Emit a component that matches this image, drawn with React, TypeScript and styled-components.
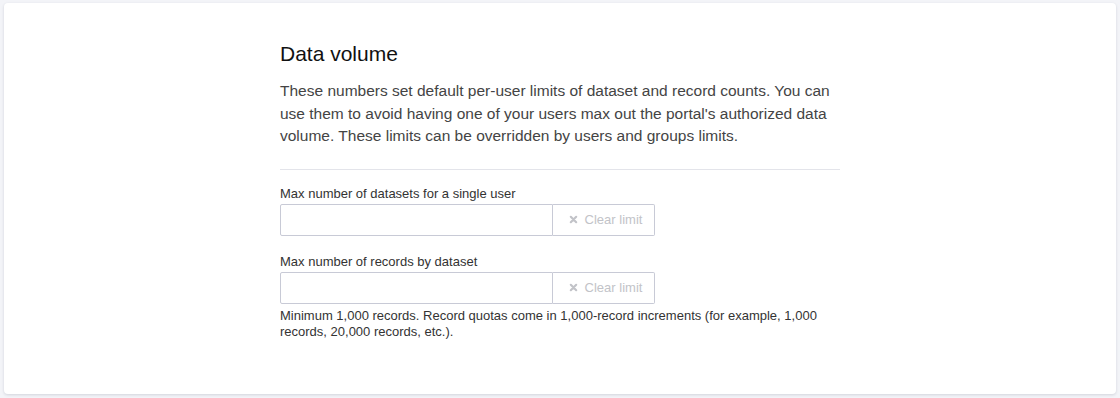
import React from "react";
import styled, { createGlobalStyle } from "styled-components";

const Global = createGlobalStyle`
  html, body {
    margin: 0;
    padding: 0;
    background: #f3f4f8;
    font-family: "Liberation Sans", Arial, sans-serif;
  }
  * { box-sizing: border-box; }
`;

const Page = styled.div`
  padding: 3px 4px 4px 4px;
`;

const Card = styled.div`
  background: #fff;
  border-radius: 4px;
  box-shadow: 0 1px 3px rgba(20, 30, 60, 0.15);
  height: 391px;
  padding: 39px 0 0 0;
`;

const Column = styled.div`
  width: 560px;
  margin: 0 auto;
`;

const Title = styled.h2`
  margin: 0;
  font-size: 21px;
  font-weight: 400;
  line-height: 24px;
  color: #111;
`;

const Intro = styled.p`
  margin: 14px 0 0 0;
  font-size: 15.5px;
  line-height: 22.5px;
  color: #444;
`;

const Divider = styled.hr`
  border: 0;
  border-top: 1px solid #e3e4ea;
  margin: 21px 0 16px 0;
`;

const Field = styled.div`
  margin-bottom: 18px;
`;

const Label = styled.label`
  display: block;
  font-size: 13px;
  line-height: 16px;
  color: #333;
  margin-bottom: 2px;
`;

const Group = styled.div`
  display: flex;
  height: 32px;
`;

const Input = styled.input`
  width: 273px;
  height: 32px;
  border: 1px solid #c8cad6;
  border-radius: 2px 0 0 2px;
  padding: 0 8px;
  font-size: 13px;
  outline: none;
`;

const ClearButton = styled.button`
  width: 102px;
  height: 32px;
  border: 1px solid #c8cad6;
  border-left: 0;
  border-radius: 0 2px 2px 0;
  background: #fff;
  color: #c2c3c8;
  font-family: inherit;
  font-size: 13px;
  display: flex;
  align-items: center;
  justify-content: center;
  gap: 7px;
  padding: 0 0 0 4px;
`;

const Help = styled.div`
  margin-top: 4px;
  font-size: 13px;
  line-height: 16px;
  color: #333;
`;

const XIcon = () => (
  <svg width="9" height="9" viewBox="0 0 10 10">
    <path d="M2 2 L8 8 M8 2 L2 8" stroke="#c2c3c8" strokeWidth="2.4" strokeLinecap="round" />
  </svg>
);

export default function App() {
  return (
    <>
      <Global />
      <Page>
        <Card>
          <Column>
            <Title>Data volume</Title>
            <Intro>
              These numbers set default per-user limits of dataset and record counts. You can
              use them to avoid having one of your users max out the portal's authorized data
              volume. These limits can be overridden by users and groups limits.
            </Intro>
            <Divider />
            <Field>
              <Label>Max number of datasets for a single user</Label>
              <Group>
                <Input type="text" />
                <ClearButton>
                  <XIcon /> Clear limit
                </ClearButton>
              </Group>
            </Field>
            <Field>
              <Label>Max number of records by dataset</Label>
              <Group>
                <Input type="text" />
                <ClearButton>
                  <XIcon /> Clear limit
                </ClearButton>
              </Group>
              <Help>
                Minimum 1,000 records. Record quotas come in 1,000-record increments (for example, 1,000
                records, 20,000 records, etc.).
              </Help>
            </Field>
          </Column>
        </Card>
      </Page>
    </>
  );
}
